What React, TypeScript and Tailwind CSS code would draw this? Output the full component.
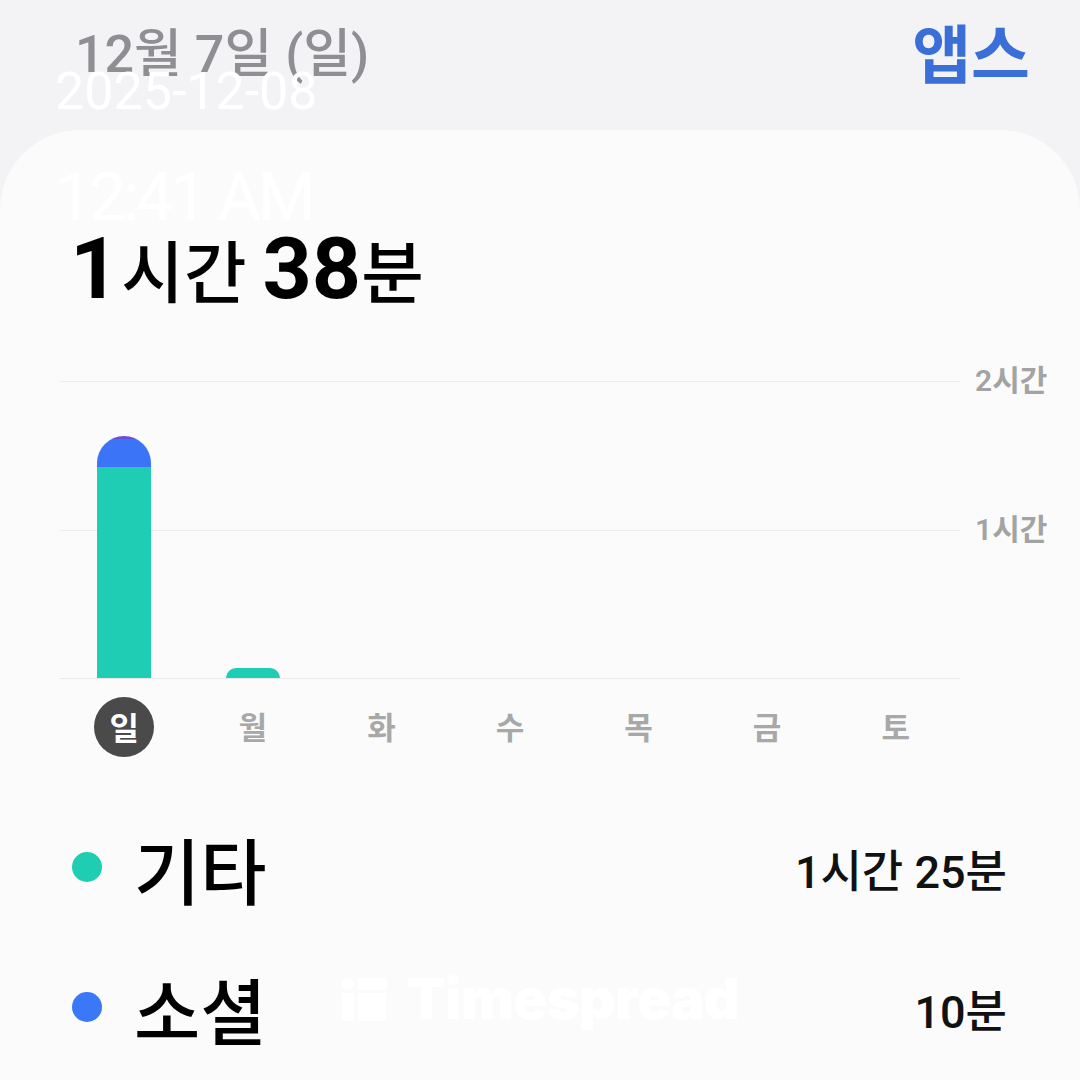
import React from "react";

const KR = { fontFamily: 'Roboto, "Noto Sans CJK KR", "Noto Sans", sans-serif' };

const days = ["일", "월", "화", "수", "목", "금", "토"];

const legend = [
  { label: "기타", value: "1시간 25분", dot: "bg-[#1fcdb3]" },
  { label: "소셜", value: "10분", dot: "bg-[#3b78f7]" },
];

function TimespreadLogo() {
  return (
    <svg width="44" height="43" viewBox="0 0 44 43" fill="#ffffff">
      <circle cx="6" cy="6" r="6" />
      <rect x="16" y="0" width="28" height="12" />
      <rect x="0" y="15" width="12" height="28" />
      <rect x="16" y="15" width="28" height="28" />
    </svg>
  );
}

export default function App() {
  return (
    <div className="relative w-[1080px] h-[1080px] overflow-hidden bg-[#f3f3f6]" style={KR}>
      {/* header */}
      <div className="h-[110px] flex items-center justify-between pl-[75px] pr-[50px]">
        <span className="text-[52px] leading-none font-medium text-[#8e8e93]">12월 7일 (일)</span>
        <span className="mt-[4px] text-[64px] leading-none font-bold text-[#3a6fd8]">앱스</span>
      </div>

      {/* card */}
      <div className="mt-[20px] h-[950px] rounded-t-[80px] bg-[#fbfbfb] pt-[96px]">
        <div className="h-[84px] pl-[70px] flex items-baseline text-[86px] leading-none text-black">
          <span className="font-bold">1</span>
          <span className="text-[68px] font-medium ml-[2px]">시간</span>
          <span className="font-bold ml-[16px]">38</span>
          <span className="text-[68px] font-medium">분</span>
        </div>

        {/* chart */}
        <div className="mt-[71px] flex pl-[60px]">
          <div className="relative w-[900px] h-[298px]">
            <div className="h-full flex flex-col justify-between">
              <div className="h-px bg-[#ececec]" />
              <div className="h-px bg-[#ececec]" />
              <div className="h-px bg-[#e8e8e8]" />
            </div>
            <div className="absolute inset-x-0 top-0 bottom-[1px] grid grid-cols-7 items-end">
              <div className="flex justify-center">
                <div className="w-[54px] h-[242px] rounded-t-full overflow-hidden flex flex-col">
                  <div className="h-[3px] bg-[#6a4fd6]" />
                  <div className="h-[28px] bg-[#3b74f7]" />
                  <div className="flex-1 bg-[#1ecdb4]" />
                </div>
              </div>
              <div className="flex justify-center">
                <div className="w-[54px] h-[10px] rounded-t-full bg-[#1ecdb4]" />
              </div>
              <div />
              <div />
              <div />
              <div />
              <div />
            </div>
          </div>
          <div className="ml-[15px] -mt-[16px] flex flex-col text-[30px] font-semibold text-[#a3a3a3]">
            <div className="h-[149px] leading-[32px]">2시간</div>
            <div className="h-[149px] leading-[32px]">1시간</div>
          </div>
        </div>

        {/* weekdays */}
        <div className="mt-[18px] ml-[60px] w-[900px] h-[60px] grid grid-cols-7">
          {days.map((d, i) => (
            <div key={d} className="flex items-center justify-center">
              {i === 0 ? (
                <div className="w-[60px] h-[60px] rounded-full bg-[#4a4a4a] flex items-center justify-center text-[32px] font-bold text-white leading-none">
                  <span className="mt-[4px]">{d}</span>
                </div>
              ) : (
                <span className="mt-[2px] text-[31px] font-semibold text-[#a8a8a8] leading-none">{d}</span>
              )}
            </div>
          ))}
        </div>

        {/* legend */}
        <div className="mt-[40px] flex flex-col">
          {legend.map((row) => (
            <div key={row.label} className="h-[140px] flex items-center pl-[72px] pr-[73px]">
              <div className={`w-[30px] h-[30px] rounded-full ${row.dot}`} />
              <span className="ml-[32px] mt-[16px] text-[72px] font-medium text-black leading-none">
                {row.label}
              </span>
              <span className="ml-auto mt-[10px] text-[45px] font-medium text-[#111111] leading-none">
                {row.value}
              </span>
            </div>
          ))}
        </div>
      </div>

      {/* watermarks */}
      <div className="absolute left-[55px] top-[66px] text-[52px] leading-none text-white">2025-12-08</div>
      <div className="absolute left-[55px] top-[165px] text-[66px] leading-none text-white tracking-[-3px]">
        12:41 AM
      </div>
      <div className="absolute left-[342px] top-[971px] flex items-center gap-[21px]">
        <TimespreadLogo />
        <span
          className="text-[56px] leading-none font-black text-white tracking-[-0.5px]"
          style={{ fontFamily: "Inter, sans-serif" }}
        >
          Timespread
        </span>
      </div>
    </div>
  );
}
